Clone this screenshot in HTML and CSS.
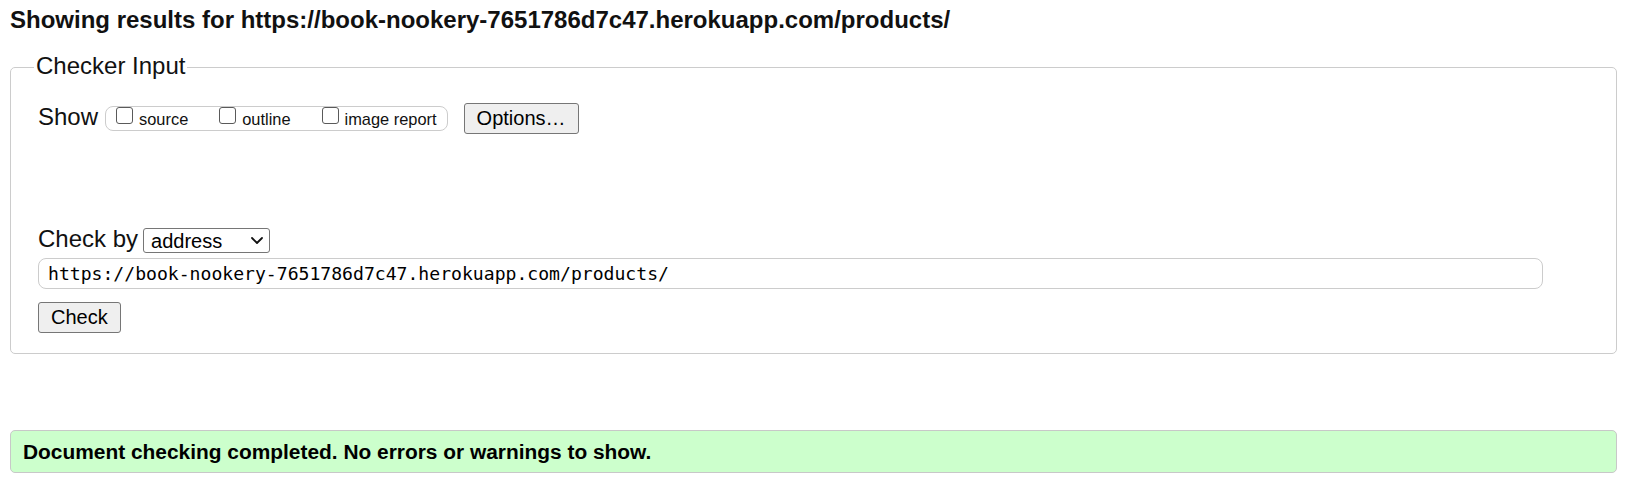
FILE: index.html
```html
<!DOCTYPE html>
<html lang="en">
<head>
<meta charset="utf-8">
<title>Nu Html Checker</title>
<link rel="stylesheet" href="styles.css">
</head>
<body>
<h2 class="title">Showing results for https://book-nookery-7651786d7c47.herokuapp.com/products/</h2>
<fieldset class="checker">
  <legend class="legend">Checker Input</legend>
  <div class="show-row">
    <span class="show-label">Show</span>
    <span class="opts">
      <label class="opt"><input class="cb" type="checkbox"><span class="opt-text">source</span></label>
      <label class="opt"><input class="cb" type="checkbox"><span class="opt-text">outline</span></label>
      <label class="opt"><input class="cb" type="checkbox"><span class="opt-text">image report</span></label>
    </span>
    <button class="btn options-btn" type="button">Options…</button>
  </div>
  <div class="checkby-row">
    <span class="checkby-label">Check by</span>
    <span class="select-wrap">
      <select class="select"><option>address</option></select>
      <svg class="chev" width="12" height="7" viewBox="0 0 12 7"><path d="M1 1 L6 6 L11 1" fill="none" stroke="#111" stroke-width="1.8" stroke-linecap="round" stroke-linejoin="round"/></svg>
    </span>
  </div>
  <input class="url" type="url" value="https://book-nookery-7651786d7c47.herokuapp.com/products/">
  <button class="btn check-btn" type="submit">Check</button>
</fieldset>
<div class="result">Document checking completed. No errors or warnings to show.</div>
</body>
</html>
```
FILE: styles.css
```css
html, body {
  background: #fff;
}
body {
  margin: 0;
  padding: 0 10px;
  font-family: "Liberation Sans", Arial, sans-serif;
  color: #111;
}
.title {
  margin: 6px 0 0;
  font-size: 24px;
  line-height: 28px;
  font-weight: bold;
  white-space: nowrap;
}
.checker {
  margin: 18px 0 0;
  padding: 0 0 20px 27px;
  border: 1px solid #cccccc;
  border-radius: 5px;
  min-width: 0;
}
.legend {
  font-size: 24px;
  line-height: 28px;
  padding: 0 2px 2px;
  margin-left: -4px;
}
.show-row {
  display: flex;
  align-items: flex-start;
  margin-top: 21px;
}
.show-label {
  font-size: 24px;
  line-height: 28px;
}
.opts {
  display: flex;
  gap: 31px;
  margin-left: 7px;
  margin-top: 3px;
  height: 25px;
  box-sizing: border-box;
  border: 1px solid #cccccc;
  border-radius: 8px;
  padding: 0 10px 0 10px;
}
.opt {
  display: flex;
  align-items: flex-start;
  gap: 6px;
  font-size: 16.4px;
}
.cb {
  appearance: none;
  -webkit-appearance: none;
  margin: 0;
  width: 17px;
  height: 17px;
  box-sizing: border-box;
  border: 1px solid #5a5a5a;
  border-radius: 3px;
  background: #fff;
}
.opt-text {
  line-height: 18px;
  padding-top: 3px;
}
.btn {
  height: 31px;
  box-sizing: border-box;
  font-family: "Liberation Sans", Arial, sans-serif;
  font-size: 20px;
  color: #000;
  padding: 0 12px;
  border: 1px solid #767676;
  border-radius: 3px;
  background: #efefef;
}
.options-btn {
  margin-left: 16px;
}
.checkby-row {
  display: flex;
  align-items: flex-start;
  margin-top: 91px;
}
.checkby-label {
  font-size: 24px;
  line-height: 28px;
}
.select-wrap {
  position: relative;
  display: block;
  margin-left: 5px;
  margin-top: 3px;
  height: 25px;
}
.select {
  appearance: none;
  -webkit-appearance: none;
  display: block;
  width: 127px;
  height: 25px;
  box-sizing: border-box;
  margin: 0;
  padding: 0 0 0 7px;
  font-family: "Liberation Sans", Arial, sans-serif;
  font-size: 20px;
  color: #000;
  border: 1px solid #767676;
  border-radius: 3px;
  background: #fff;
}
.chev {
  position: absolute;
  right: 7px;
  top: 9px;
}
.url {
  display: block;
  width: calc(100% - 73px);
  height: 31px;
  box-sizing: border-box;
  margin: 5px 0 0;
  padding: 0 0 0 9px;
  font-family: "DejaVu Sans Mono", monospace;
  font-size: 18.1px;
  color: #000;
  border: 1px solid #cccccc;
  border-radius: 8px;
  background: #fff;
}
.check-btn {
  display: block;
  margin-top: 13px;
}
.result {
  margin-top: 76px;
  height: 43px;
  box-sizing: border-box;
  display: flex;
  align-items: center;
  padding: 0 12px;
  border: 1px solid #c8c8c8;
  border-radius: 5px;
  background: #ccffcc;
  font-size: 20.9px;
  font-weight: bold;
  color: #000;
}
```
